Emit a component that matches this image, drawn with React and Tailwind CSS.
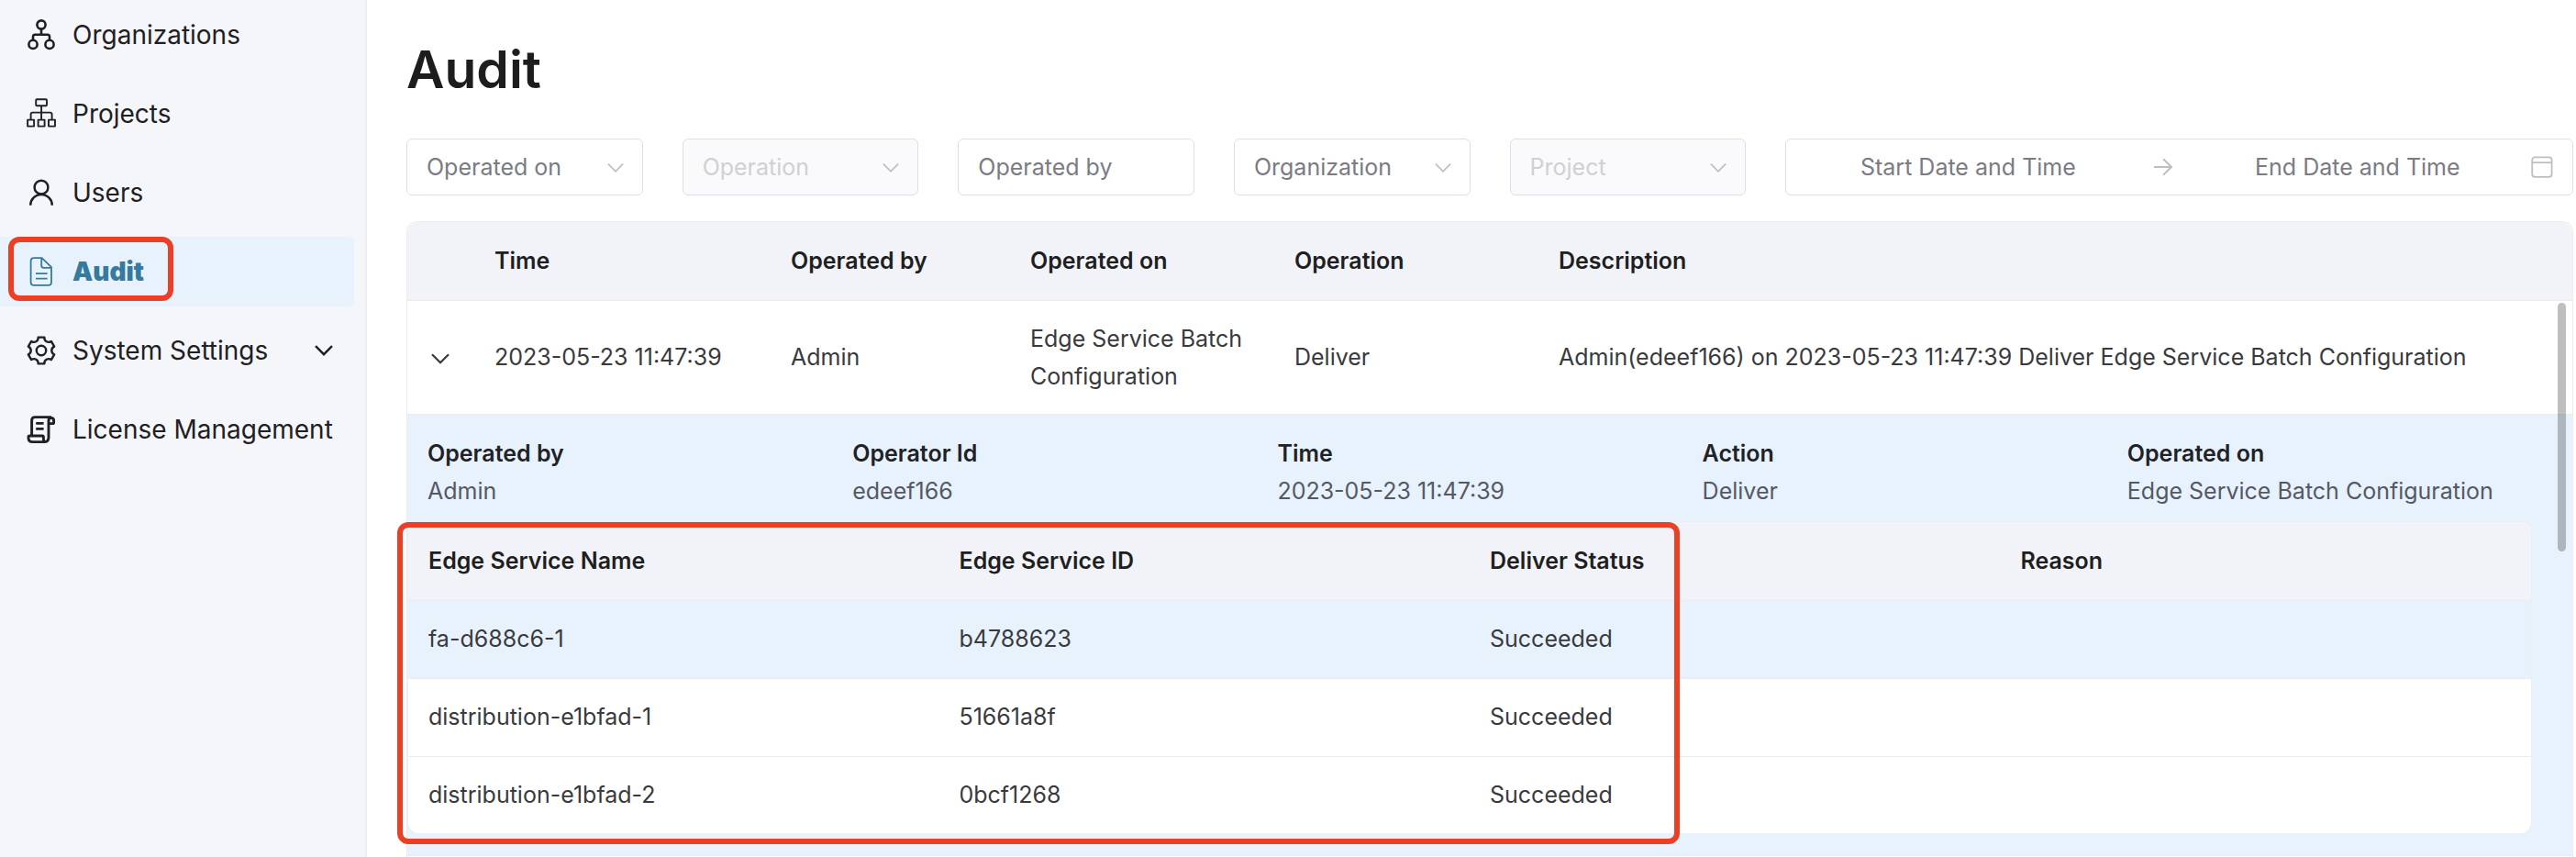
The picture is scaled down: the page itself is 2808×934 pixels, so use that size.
import React from "react";

const gearPath = (() => {
  const point = (radius, degrees) => {
    const a = ((degrees - 90) * Math.PI) / 180;
    return `${(16 + radius * Math.cos(a)).toFixed(2)} ${(16 + radius * Math.sin(a)).toFixed(2)}`;
  };
  let d = `M${point(14.8, -13)}`;
  for (let tooth = 0; tooth < 6; tooth += 1) {
    const a = tooth * 60;
    d += `L${point(14.8, a + 13)}C${point(10.6, a + 17)} ${point(10.6, a + 43)} ${point(14.8, a + 47)}`;
  }
  return `${d}Z`;
})();

function Icon({ children, width }) {
  return (
    <svg
      viewBox="0 0 32 32"
      className="size-8 shrink-0 overflow-visible"
      fill="none"
      stroke="currentColor"
      strokeWidth={width}
      strokeLinejoin="round"
      aria-hidden="true"
    >
      {children}
    </svg>
  );
}

function Chevron({ className, width = 2 }) {
  return (
    <svg viewBox="0 0 20 12" className={className} fill="none" stroke="currentColor" strokeWidth={width} aria-hidden="true">
      <path d="M1 1.2l9 9 9-9" />
    </svg>
  );
}

const navItems = [
  {
    label: "Organizations",
    icon: (
      <Icon width={2.6}>
        <circle cx="16" cy="5" r="4.6" />
        <circle cx="7" cy="26.4" r="4.6" />
        <circle cx="25" cy="26.4" r="4.6" />
        <path d="M16 9.6v6.2M7 21.8V18q0-2.2 2.2-2.2h13.6q2.2 0 2.2 2.2v3.8" />
      </Icon>
    ),
  },
  {
    label: "Projects",
    icon: (
      <Icon width={1.9}>
        <rect x="10.2" y="0.2" width="11.8" height="7" rx="1" />
        <rect x="1.1" y="22.6" width="7" height="7" />
        <rect x="12.6" y="22.6" width="7" height="7" />
        <rect x="24" y="22.6" width="7" height="7" />
        <path d="M16.1 7.2v15.4M4.6 22.6v-6q0-2 2-2h19q2 0 2 2v6" />
      </Icon>
    ),
  },
  {
    label: "Users",
    icon: (
      <Icon width={2.5}>
        <circle cx="16" cy="10.2" r="7.4" />
        <path d="M4.2 29.8a11.8 11.9 0 0 1 23.6 0" />
      </Icon>
    ),
  },
  {
    label: "Audit",
    active: true,
    icon: (
      <Icon width={1.8}>
        <path d="M16.6 1.1H8q-3.4 0-3.4 3.4v23q0 3.4 3.4 3.4h15.6q3.4 0 3.4-3.4V11.2Z" />
        <path d="M16.2 1.4v7.8q0 2.6 2.6 2.6h8M10 18.1h12.6M10 23.6h12.6" />
      </Icon>
    ),
  },
  {
    label: "System Settings",
    expandable: true,
    icon: (
      <Icon width={2.4}>
        <path d={gearPath} />
        <circle cx="16" cy="16" r="5.2" />
      </Icon>
    ),
  },
  {
    label: "License Management",
    icon: (
      <Icon width={2.9}>
        <path d="M5.6 22.5V6.2q0-3.6 3.6-3.6H27M10.2 9.4h8.4M10.2 15.4h8.4" />
        <path d="M24.2 9.6h4.2q1.2 0 1.2-1.2V5.6a2.9 2.9 0 0 0-5.6 0v19.2q0 4.4-4 4.8H6.4q-4.4 0-4.4-4v-1.4q0-1.2 1.2-1.2h14q1.2 0 1.2 1.2v2.2q0 3 2.2 3" />
      </Icon>
    ),
  },
];

function Sidebar() {
  return (
    <aside className="w-[400px] shrink-0 border-r-2 border-[#eeeff4] bg-[#f5f6fa]">
      <nav className="flex flex-col gap-2.5 pr-3">
        {navItems.map((item) => (
          <a
            key={item.label}
            href="#"
            className={
              item.active
                ? "relative flex h-[76px] items-center gap-[18px] rounded-r-md bg-[#e8f2fd] pl-[29px] font-black text-[#357a9f]"
                : "flex h-[76px] items-center gap-[18px] pl-[29px] text-[#1f2023]"
            }
          >
            {item.icon}
            <span>{item.label}</span>
            {item.expandable && <Chevron className="mr-[23px] ml-auto h-3 w-5" width={2.4} />}
            {item.active && (
              <span className="absolute top-0 left-[9px] h-[70px] w-[180px] rounded-xl border-6 border-[#ec4026]" />
            )}
          </a>
        ))}
      </nav>
    </aside>
  );
}

function SelectFilter({ label, disabled }) {
  return (
    <div className="relative">
      <select
        aria-label={label}
        disabled={disabled}
        className="h-[62px] w-full appearance-none rounded-md border border-[#dfdfea] bg-white pr-12 pl-[21px] text-[#7b7b83] disabled:bg-[#fafafc] disabled:text-[#d0d0d3] disabled:opacity-100"
      >
        <option>{label}</option>
      </select>
      <Chevron
        className="pointer-events-none absolute top-[26px] right-[21px] h-3 w-[18px] text-[#bfbfbf]"
      />
    </div>
  );
}

function Filters() {
  return (
    <form className="grid grid-cols-[repeat(5,3fr)_10fr] gap-[43px] text-[25px]">
      <SelectFilter label="Operated on" />
      <SelectFilter label="Operation" disabled />
      <input
        aria-label="Operated by"
        placeholder="Operated by"
        className="h-[62px] w-full min-w-0 rounded-md border border-[#dfdfea] bg-white px-[21px] placeholder:text-[#7b7b83]"
      />
      <SelectFilter label="Organization" />
      <SelectFilter label="Project" disabled />
      <div className="flex h-[62px] min-w-0 items-center rounded-md border border-[#dfdfea] bg-white px-[21px]">
        <input
          aria-label="Start Date and Time"
          placeholder="Start Date and Time"
          className="min-w-0 flex-1 text-center placeholder:text-[#7b7b83]"
        />
        <span className="flex w-[70px] shrink-0 justify-center text-[#bfbfbf]">
          <svg viewBox="0 0 20 20" className="size-5" fill="none" stroke="currentColor" strokeWidth="2" aria-hidden="true">
            <path d="M0 10h18.5M10 1.2l9 8.8-9 8.8" />
          </svg>
        </span>
        <input
          aria-label="End Date and Time"
          placeholder="End Date and Time"
          className="min-w-0 flex-1 text-center placeholder:text-[#7b7b83]"
        />
        <svg
          viewBox="0 0 24 24"
          className="ml-3 size-6 shrink-0 text-[#bfbfbf]"
          fill="none"
          stroke="currentColor"
          strokeWidth="1.8"
          aria-hidden="true"
        >
          <rect x="1.2" y="1.4" width="21.4" height="21.4" rx="3" />
          <path d="M1.2 7.2h21.4" />
        </svg>
      </div>
    </form>
  );
}

const details = [
  ["Operated by", "Admin"],
  ["Operator Id", "edeef166"],
  ["Time", "2023-05-23 11:47:39"],
  ["Action", "Deliver"],
  ["Operated on", "Edge Service Batch Configuration"],
];

const services = [
  ["fa-d688c6-1", "b4788623", "Succeeded", ""],
  ["distribution-e1bfad-1", "51661a8f", "Succeeded", ""],
  ["distribution-e1bfad-2", "0bcf1268", "Succeeded", ""],
];

function ServiceTable() {
  return (
    <div className="relative mt-3 mr-11 ml-px">
      <div className="overflow-hidden rounded-xl border-t border-r border-[#eeeef2] bg-white">
        <table className="w-full table-fixed border-collapse text-left">
          <thead>
            <tr className="h-[85px] border-b border-[#ececf0] bg-[#f2f3f9] text-[#1f1f1f]">
              {["Edge Service Name", "Edge Service ID", "Deliver Status", "Reason"].map((name) => (
                <th key={name} className="px-[22px] font-semibold">
                  {name}
                </th>
              ))}
            </tr>
          </thead>
          <tbody>
            {services.map((row) => (
              <tr
                key={row[0]}
                className="h-[85px] border-b border-[#ececf0] text-[#3a3a3e] first:bg-[#e8f2fd] last:h-[84px] last:border-b-0"
              >
                {row.map((cell, index) => (
                  <td key={index} className="px-[22px]">
                    {cell}
                  </td>
                ))}
              </tr>
            ))}
          </tbody>
        </table>
      </div>
      <div className="pointer-events-none absolute top-px -bottom-3 -left-3 w-[1398px] rounded-xl border-6 border-[#ec4026]" />
    </div>
  );
}

function AuditTable() {
  return (
    <section className="relative mt-7 flex-1 rounded-t-xl border border-b-0 border-[#ececf0] text-[25px] leading-[41px]">
      <table className="w-full table-fixed border-separate border-spacing-0 text-left">
        <colgroup>
          <col className="w-[72px]" />
          <col className="w-[323px]" />
          <col className="w-[261px]" />
          <col className="w-[288px]" />
          <col className="w-[288px]" />
          <col />
        </colgroup>
        <thead>
          <tr className="h-[86px] text-[#1f1f1f]">
            <th aria-label="Expand" className="rounded-tl-xl border-b border-[#ececf0] bg-[#f2f3f9]" />
            {["Time", "Operated by", "Operated on", "Operation", "Description"].map((name) => (
              <th
                key={name}
                className="border-b border-[#ececf0] bg-[#f2f3f9] px-[23px] font-semibold last:rounded-tr-xl"
              >
                {name}
              </th>
            ))}
          </tr>
        </thead>
        <tbody>
          <tr className="h-[124px] text-[#3a3a3e]">
            <td className="border-b border-[#ececf0] text-center">
              <button type="button" aria-label="Collapse row" className="p-1 align-middle">
                <Chevron className="h-3 w-5" width={2.2} />
              </button>
            </td>
            <td className="border-b border-[#ececf0] px-[23px]">2023-05-23 11:47:39</td>
            <td className="border-b border-[#ececf0] px-[23px]">Admin</td>
            <td className="border-b border-[#ececf0] px-[23px]">Edge Service Batch Configuration</td>
            <td className="border-b border-[#ececf0] px-[23px]">Deliver</td>
            <td className="border-b border-[#ececf0] px-[23px]">
              Admin(edeef166) on 2023-05-23 11:47:39 Deliver Edge Service Batch Configuration
            </td>
          </tr>
          <tr>
            <td colSpan={6} className="border-b border-[#ececf0] bg-[#e8f2fd] pt-[22px] pb-6">
              <dl className="grid grid-cols-5 px-[22px]">
                {details.map(([term, value]) => (
                  <div key={term} className="whitespace-nowrap">
                    <dt className="font-semibold text-[#1f2226]">{term}</dt>
                    <dd className="text-[#555966]">{value}</dd>
                  </div>
                ))}
              </dl>
              <ServiceTable />
            </td>
          </tr>
        </tbody>
      </table>
      <div className="absolute top-[88px] right-[7px] h-[271px] w-[9px] rounded-full bg-black/25" />
    </section>
  );
}

export default function App() {
  return (
    <div className="flex h-screen overflow-hidden bg-white font-['Inter','Liberation_Sans',sans-serif] text-[28px] leading-10">
      <Sidebar />
      <main className="flex min-w-0 flex-1 flex-col pt-10 pr-[3px] pl-[43px]">
        <h1 className="mb-[39px] text-[57px] leading-[72px] font-semibold text-[#1d1d1f]">Audit</h1>
        <Filters />
        <AuditTable />
      </main>
    </div>
  );
}
